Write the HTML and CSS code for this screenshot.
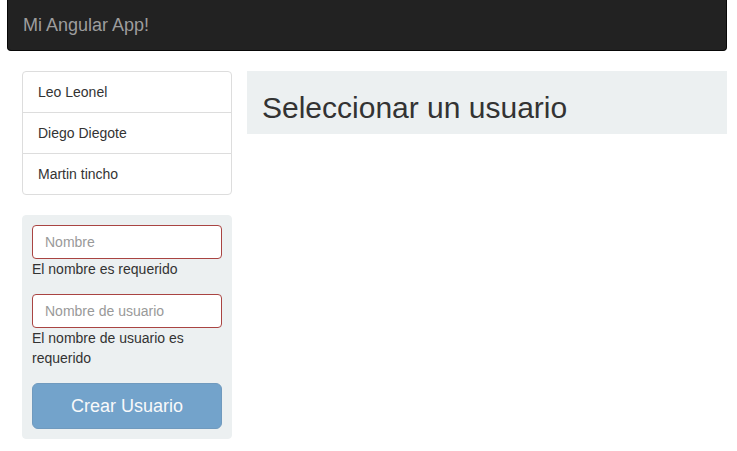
FILE: index.html
```html
<!DOCTYPE html>
<html lang="es">
<head>
<meta charset="utf-8">
<title>Mi Angular App!</title>
<link rel="stylesheet" href="styles.css">
</head>
<body>
<div class="page">
  <nav class="navbar">
    <span class="brand">Mi Angular App!</span>
  </nav>
  <div class="content">
    <aside class="sidebar">
      <ul class="list-group">
        <li class="list-item">Leo Leonel</li>
        <li class="list-item">Diego Diegote</li>
        <li class="list-item">Martin tincho</li>
      </ul>
      <form class="well">
        <div class="form-group">
          <input class="form-control" type="text" placeholder="Nombre">
          <div class="error-text">El nombre es requerido</div>
        </div>
        <div class="form-group">
          <input class="form-control" type="text" placeholder="Nombre de usuario">
          <div class="error-text">El nombre de usuario es requerido</div>
        </div>
        <button class="btn" type="button" disabled>Crear Usuario</button>
      </form>
    </aside>
    <main class="main">
      <div class="panel">
        <h2 class="title">Seleccionar un usuario</h2>
      </div>
    </main>
  </div>
</div>
</body>
</html>
```

FILE: styles.css
```css
* { box-sizing: border-box; }
html, body { margin: 0; padding: 0; background: #fff; }
body {
  font-family: "Liberation Sans", Arial, sans-serif;
  font-size: 14px;
  line-height: 20px;
  color: #333;
}
.page {
  width: 720px;
  margin-left: 7px;
}
.navbar {
  height: 51px;
  background: #222;
  border: 1px solid #080808;
  border-top: 0;
  border-radius: 0 0 4px 4px;
  display: flex;
  align-items: flex-start;
}
.brand {
  padding: 15px 15px;
  font-size: 18px;
  line-height: 20px;
  color: #9d9d9d;
}
.content {
  display: flex;
  gap: 15px;
  margin-top: 20px;
  padding-left: 15px;
}
.sidebar { width: 210px; flex: none; }
.main { flex: 1; }
.list-group {
  list-style: none;
  margin: 0 0 20px;
  padding: 0;
}
.list-item {
  padding: 10px 15px;
  border: 1px solid #ddd;
  margin-bottom: -1px;
  background: #fff;
}
.list-item:first-child { border-radius: 4px 4px 0 0; }
.list-item:last-child { border-radius: 0 0 4px 4px; margin-bottom: 0; }
.well {
  background: #ecf0f1;
  border: 1px solid #ecf0f1;
  border-radius: 4px;
  padding: 9px;
  margin: 0;
}
.form-group { margin-bottom: 15px; }
.form-control {
  display: block;
  width: 100%;
  height: 34px;
  padding: 6px 12px;
  font-family: inherit;
  font-size: 14px;
  line-height: 20px;
  color: #555;
  background: #fff;
  border: 1px solid #a94442;
  border-radius: 4px;
  margin: 0;
  outline: none;
}
.form-control::placeholder { color: #999; }
.error-text { color: #333; }
.btn {
  display: block;
  width: 100%;
  height: 46px;
  padding: 10px 16px;
  font-family: inherit;
  font-size: 18px;
  line-height: 24px;
  color: #fff;
  background: #337ab7;
  border: 1px solid #2e6da4;
  border-radius: 6px;
  opacity: 0.65;
  text-align: center;
}
.panel {
  background: #ecf0f1;
  padding: 20px 15px 10px;
}
.title {
  margin: 0;
  font-size: 30px;
  line-height: 33px;
  font-weight: 500;
  color: #333;
}
```
